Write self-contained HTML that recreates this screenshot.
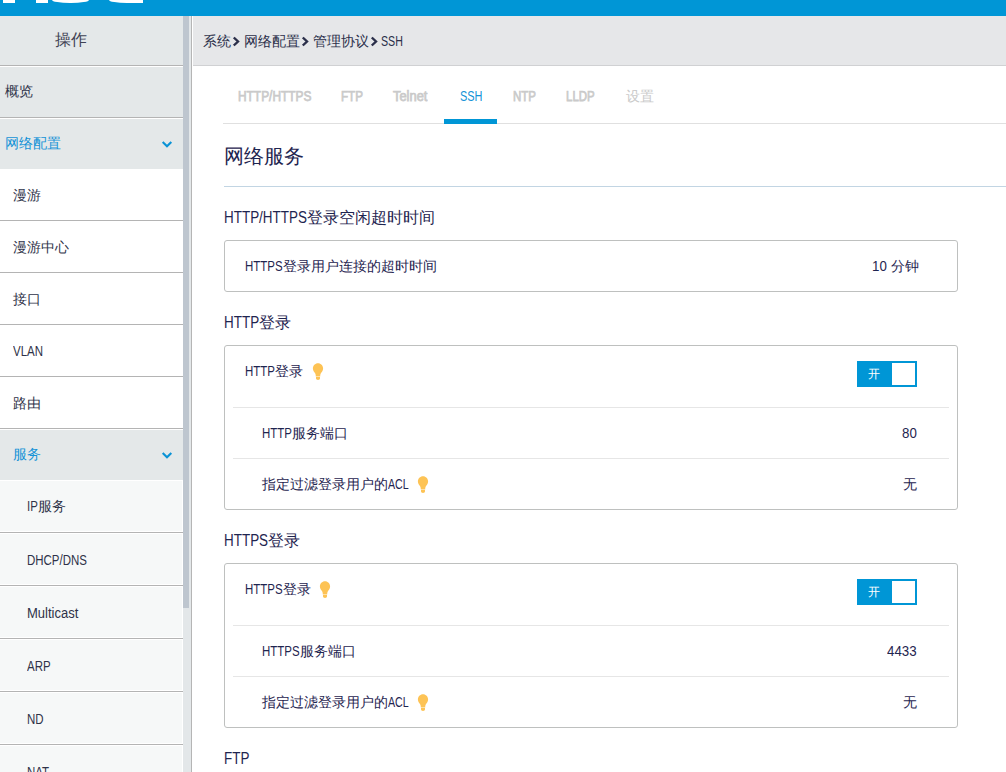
<!DOCTYPE html>
<html><head><meta charset="utf-8">
<style>
*{margin:0;padding:0;box-sizing:border-box}
html,body{width:1006px;height:772px;overflow:hidden;background:#fff;font-family:"Liberation Sans",sans-serif;color:#333}
.a{position:absolute}
.t{position:absolute;white-space:nowrap;line-height:1}
.L{display:inline-block;transform-origin:0 50%}
.sep{position:absolute;left:0;width:183px;height:1px;background:#b4b4b4}
.wsep{position:absolute;left:0;width:183px;height:1px;background:#fff}
</style></head><body>
<div class="a" style="left:0;top:0;width:1006px;height:16px;background:#0096d6">
  <div class="a" style="left:3px;top:0;width:12px;height:3px;background:#fff"></div>
  <div class="a" style="left:36px;top:0;width:12px;height:3px;background:#fff"></div>
  <div class="a" style="left:52px;top:0;width:37px;height:3px;background:#fff;border-radius:0 0 18px 18px/0 0 3px 3px"></div>
  <div class="a" style="left:109px;top:0;width:34px;height:3px;background:#fff;border-radius:0 0 0 18px/0 0 0 3px"></div>
</div>
<div class="a" style="left:0;top:16px;width:183px;height:153px;background:#e4e8e9"></div>
<div class="a" style="left:0;top:169px;width:183px;height:261px;background:#fff"></div>
<div class="a" style="left:0;top:430px;width:183px;height:50px;background:#e4e8e9"></div>
<div class="a" style="left:0;top:480px;width:183px;height:292px;background:#f6f8f8"></div>
<div class="a" style="left:182px;top:480px;width:1px;height:292px;background:#fff"></div>
<div class="sep" style="top:65px"></div><div class="wsep" style="top:66px"></div>
<div class="sep" style="top:117px"></div><div class="wsep" style="top:118px"></div>
<div class="sep" style="top:220px"></div>
<div class="sep" style="top:272px"></div>
<div class="sep" style="top:324px"></div>
<div class="sep" style="top:376px"></div>
<div class="sep" style="top:428px"></div>
<div class="wsep" style="top:429px"></div><div class="wsep" style="top:480px"></div>
<div class="wsep" style="top:531px"></div><div class="sep" style="top:532px"></div><div class="wsep" style="top:533px"></div>
<div class="wsep" style="top:584px"></div><div class="sep" style="top:585px"></div><div class="wsep" style="top:586px"></div>
<div class="wsep" style="top:637px"></div><div class="sep" style="top:638px"></div><div class="wsep" style="top:639px"></div>
<div class="wsep" style="top:690px"></div><div class="sep" style="top:691px"></div><div class="wsep" style="top:692px"></div>
<div class="wsep" style="top:743px"></div><div class="sep" style="top:744px"></div><div class="wsep" style="top:745px"></div>
<div class="t" style="left:55px;top:32px;font-size:16px;color:#3f4254;">操作</div>
<div class="t" style="left:5px;top:84px;font-size:14px;color:#2f3349;">概览</div>
<div class="t" style="left:5px;top:136px;font-size:14px;color:#1593d7;">网络配置</div>
<svg class="a" style="left:160px;top:139px" width="14" height="10"><polyline points="2.7,3 7,7.3 11.3,3" fill="none" stroke="#0a93d6" stroke-width="2.1"/></svg>
<div class="t" style="left:13px;top:188px;font-size:14px;color:#2f3349;">漫游</div>
<div class="t" style="left:13px;top:240px;font-size:14px;color:#2f3349;">漫游中心</div>
<div class="t" style="left:13px;top:292px;font-size:14px;color:#2f3349;">接口</div>
<div class="t" style="left:13px;top:344px;font-size:14px;color:#2f3349;"><span class="L" style="transform:scaleX(0.82);margin-right:-6.58px">VLAN</span></div>
<div class="t" style="left:13px;top:396px;font-size:14px;color:#2f3349;">路由</div>
<div class="t" style="left:13px;top:447px;font-size:14px;color:#1593d7;">服务</div>
<svg class="a" style="left:160px;top:450px" width="14" height="10"><polyline points="2.7,3 7,7.3 11.3,3" fill="none" stroke="#0a93d6" stroke-width="2.1"/></svg>
<div class="t" style="left:27px;top:499px;font-size:14px;color:#2f3349;"><span class="L" style="transform:scaleX(0.82);margin-right:-2.38px">IP</span>服务</div>
<div class="t" style="left:27px;top:553px;font-size:14px;color:#2f3349;"><span class="L" style="transform:scaleX(0.82);margin-right:-13.16px">DHCP/DNS</span></div>
<div class="t" style="left:27px;top:606px;font-size:14px;color:#2f3349;"><span class="L" style="transform:scaleX(0.93);margin-right:-3.87px">Multicast</span></div>
<div class="t" style="left:27px;top:659px;font-size:14px;color:#2f3349;"><span class="L" style="transform:scaleX(0.82);margin-right:-5.18px">ARP</span></div>
<div class="t" style="left:27px;top:712px;font-size:14px;color:#2f3349;"><span class="L" style="transform:scaleX(0.82);margin-right:-3.64px">ND</span></div>
<div class="t" style="left:27px;top:765px;font-size:14px;color:#2f3349;"><span class="L" style="transform:scaleX(0.82);margin-right:-4.85px">NAT</span></div>
<div class="a" style="left:183px;top:16px;width:8px;height:756px;background:#e3e7e9"></div>
<div class="a" style="left:183px;top:16px;width:6px;height:592px;background:#bec6cf"></div>
<div class="a" style="left:191px;top:16px;width:1px;height:756px;background:#b5b5b5"></div>
<div class="a" style="left:193px;top:16px;width:813px;height:49px;background:#e6e7e9"></div>
<div class="a" style="left:193px;top:65px;width:813px;height:1px;background:#d0d1d3"></div>
<div class="t" style="left:203px;top:34px;font-size:14px;color:#2b2f4a;">系统</div>
<div class="t" style="left:244px;top:34px;font-size:14px;color:#2b2f4a;">网络配置</div>
<div class="t" style="left:313px;top:34px;font-size:14px;color:#2b2f4a;">管理协议</div>
<div class="t" style="left:381px;top:34px;font-size:14px;color:#2b2f4a;"><span class="L" style="transform:scaleX(0.76);margin-right:-6.91px">SSH</span></div>
<svg class="a" style="left:232px;top:36px" width="9" height="11"><polyline points="1.8,1.5 6,5.5 1.8,9.5" fill="none" stroke="#2b2f4a" stroke-width="2.4"/></svg>
<svg class="a" style="left:301px;top:36px" width="9" height="11"><polyline points="1.8,1.5 6,5.5 1.8,9.5" fill="none" stroke="#2b2f4a" stroke-width="2.4"/></svg>
<svg class="a" style="left:370px;top:36px" width="9" height="11"><polyline points="1.8,1.5 6,5.5 1.8,9.5" fill="none" stroke="#2b2f4a" stroke-width="2.4"/></svg>
<div class="t" style="left:238px;top:89px;font-size:14px;color:#cacaca;-webkit-text-stroke:0.75px #cacaca"><span class="L" style="transform:scaleX(0.85);margin-right:-12.95px">HTTP/HTTPS</span></div>
<div class="t" style="left:341px;top:89px;font-size:14px;color:#cacaca;-webkit-text-stroke:0.75px #cacaca"><span class="L" style="transform:scaleX(0.83);margin-right:-4.50px">FTP</span></div>
<div class="t" style="left:393px;top:89px;font-size:14px;color:#cacaca;-webkit-text-stroke:0.75px #cacaca"><span class="L" style="transform:scaleX(0.92);margin-right:-2.99px">Telnet</span></div>
<div class="t" style="left:460px;top:89px;font-size:14px;color:#1593d7;"><span class="L" style="transform:scaleX(0.78);margin-right:-6.34px">SSH</span></div>
<div class="t" style="left:513px;top:89px;font-size:14px;color:#cacaca;-webkit-text-stroke:0.75px #cacaca"><span class="L" style="transform:scaleX(0.82);margin-right:-5.04px">NTP</span></div>
<div class="t" style="left:566px;top:89px;font-size:14px;color:#cacaca;-webkit-text-stroke:0.75px #cacaca"><span class="L" style="transform:scaleX(0.82);margin-right:-6.31px">LLDP</span></div>
<div class="t" style="left:626px;top:89px;font-size:14px;color:#cacaca;">设置</div>
<div class="a" style="left:223px;top:123px;width:783px;height:1px;background:#e0e0e0"></div>
<div class="a" style="left:444px;top:119px;width:53px;height:5px;background:#0096d6"></div>
<div class="t" style="left:224px;top:146px;font-size:20px;color:#1f2550;">网络服务</div>
<div class="a" style="left:224px;top:186px;width:782px;height:1px;background:#c2d5e3"></div>
<div class="t" style="left:224px;top:210px;font-size:16px;color:#1f2550;"><span class="L" style="transform:scaleX(0.84);margin-right:-15.79px">HTTP/HTTPS</span>登录空闲超时时间</div>
<div class="a" style="left:224px;top:240px;width:734px;height:52px;border:1px solid #bec0bf;border-radius:3px"></div>
<div class="t" style="left:245px;top:259px;font-size:14px;color:#1f2550;"><span class="L" style="transform:scaleX(0.82);margin-right:-8.26px">HTTPS</span>登录用户连接的超时时间</div>
<div class="t" style="left:872px;top:259px;font-size:14px;color:#1f2550;"><span class="L" style="transform:scaleX(0.95);margin-right:-0.78px">10</span> 分钟</div>
<div class="t" style="left:224px;top:315px;font-size:16px;color:#1f2550;"><span class="L" style="transform:scaleX(0.84);margin-right:-6.69px">HTTP</span>登录</div>
<div class="a" style="left:224px;top:345px;width:734px;height:165px;border:1px solid #bec0bf;border-radius:3px"></div>
<div class="t" style="left:245px;top:364px;font-size:14px;color:#1f2550;"><span class="L" style="transform:scaleX(0.82);margin-right:-6.58px">HTTP</span>登录</div>
<div class="a" style="left:857px;top:361px;width:60px;height:26px;background:#0096d6"></div>
<div class="a" style="left:892px;top:363px;width:23px;height:22px;background:#fff"></div>
<div class="t" style="left:868px;top:368px;font-size:12px;color:#fff;">开</div>
<div class="a" style="left:233px;top:407px;width:716px;height:1px;background:#e6e6e6"></div>
<div class="t" style="left:262px;top:426px;font-size:14px;color:#1f2550;"><span class="L" style="transform:scaleX(0.82);margin-right:-6.58px">HTTP</span>服务端口</div>
<div class="t" style="right:89px;top:426px;font-size:14px;color:#1f2550;line-height:1"><span class="L" style="transform:scaleX(0.95);margin-right:-0.78px">80</span></div>
<div class="a" style="left:233px;top:458px;width:716px;height:1px;background:#e6e6e6"></div>
<div class="t" style="left:262px;top:477px;font-size:14px;color:#1f2550;">指定过滤登录用户的<span class="L" style="transform:scaleX(0.76);margin-right:-6.54px">ACL</span></div>
<div class="t" style="left:903px;top:477px;font-size:14px;color:#1f2550;">无</div>
<svg class="a" style="left:312px;top:363px" width="12" height="18" viewBox="0 0 12 18"><path d="M6 0.2C3.1 0.2 0.9 2.5 0.9 5.4C0.9 7.4 2 8.6 2.8 9.8C3.5 10.6 3.8 11.6 3.8 13.4H8.2C8.2 11.6 8.5 10.6 9.2 9.8C10 8.6 11.1 7.4 11.1 5.4C11.1 2.5 8.9 0.2 6 0.2Z" fill="#fdc355"/><path d="M4 14.1H8V15.2C8 16.2 7.2 16.9 6 16.9C4.8 16.9 4 16.2 4 15.2Z" fill="#fdc355"/></svg>
<svg class="a" style="left:417px;top:476px" width="12" height="18" viewBox="0 0 12 18"><path d="M6 0.2C3.1 0.2 0.9 2.5 0.9 5.4C0.9 7.4 2 8.6 2.8 9.8C3.5 10.6 3.8 11.6 3.8 13.4H8.2C8.2 11.6 8.5 10.6 9.2 9.8C10 8.6 11.1 7.4 11.1 5.4C11.1 2.5 8.9 0.2 6 0.2Z" fill="#fdc355"/><path d="M4 14.1H8V15.2C8 16.2 7.2 16.9 6 16.9C4.8 16.9 4 16.2 4 15.2Z" fill="#fdc355"/></svg>
<div class="t" style="left:224px;top:533px;font-size:16px;color:#1f2550;"><span class="L" style="transform:scaleX(0.84);margin-right:-8.39px">HTTPS</span>登录</div>
<div class="a" style="left:224px;top:563px;width:734px;height:165px;border:1px solid #bec0bf;border-radius:3px"></div>
<div class="t" style="left:245px;top:582px;font-size:14px;color:#1f2550;"><span class="L" style="transform:scaleX(0.82);margin-right:-8.26px">HTTPS</span>登录</div>
<div class="a" style="left:857px;top:579px;width:60px;height:26px;background:#0096d6"></div>
<div class="a" style="left:892px;top:581px;width:23px;height:22px;background:#fff"></div>
<div class="t" style="left:868px;top:586px;font-size:12px;color:#fff;">开</div>
<div class="a" style="left:233px;top:625px;width:716px;height:1px;background:#e6e6e6"></div>
<div class="t" style="left:262px;top:644px;font-size:14px;color:#1f2550;"><span class="L" style="transform:scaleX(0.82);margin-right:-8.26px">HTTPS</span>服务端口</div>
<div class="t" style="right:89px;top:644px;font-size:14px;color:#1f2550;line-height:1"><span class="L" style="transform:scaleX(0.95);margin-right:-1.56px">4433</span></div>
<div class="a" style="left:233px;top:676px;width:716px;height:1px;background:#e6e6e6"></div>
<div class="t" style="left:262px;top:695px;font-size:14px;color:#1f2550;">指定过滤登录用户的<span class="L" style="transform:scaleX(0.76);margin-right:-6.54px">ACL</span></div>
<div class="t" style="left:903px;top:695px;font-size:14px;color:#1f2550;">无</div>
<svg class="a" style="left:319px;top:581px" width="12" height="18" viewBox="0 0 12 18"><path d="M6 0.2C3.1 0.2 0.9 2.5 0.9 5.4C0.9 7.4 2 8.6 2.8 9.8C3.5 10.6 3.8 11.6 3.8 13.4H8.2C8.2 11.6 8.5 10.6 9.2 9.8C10 8.6 11.1 7.4 11.1 5.4C11.1 2.5 8.9 0.2 6 0.2Z" fill="#fdc355"/><path d="M4 14.1H8V15.2C8 16.2 7.2 16.9 6 16.9C4.8 16.9 4 16.2 4 15.2Z" fill="#fdc355"/></svg>
<svg class="a" style="left:417px;top:694px" width="12" height="18" viewBox="0 0 12 18"><path d="M6 0.2C3.1 0.2 0.9 2.5 0.9 5.4C0.9 7.4 2 8.6 2.8 9.8C3.5 10.6 3.8 11.6 3.8 13.4H8.2C8.2 11.6 8.5 10.6 9.2 9.8C10 8.6 11.1 7.4 11.1 5.4C11.1 2.5 8.9 0.2 6 0.2Z" fill="#fdc355"/><path d="M4 14.1H8V15.2C8 16.2 7.2 16.9 6 16.9C4.8 16.9 4 16.2 4 15.2Z" fill="#fdc355"/></svg>
<div class="t" style="left:224px;top:751px;font-size:16px;color:#1f2550;"><span class="L" style="transform:scaleX(0.84);margin-right:-4.84px">FTP</span></div>
</body></html>
